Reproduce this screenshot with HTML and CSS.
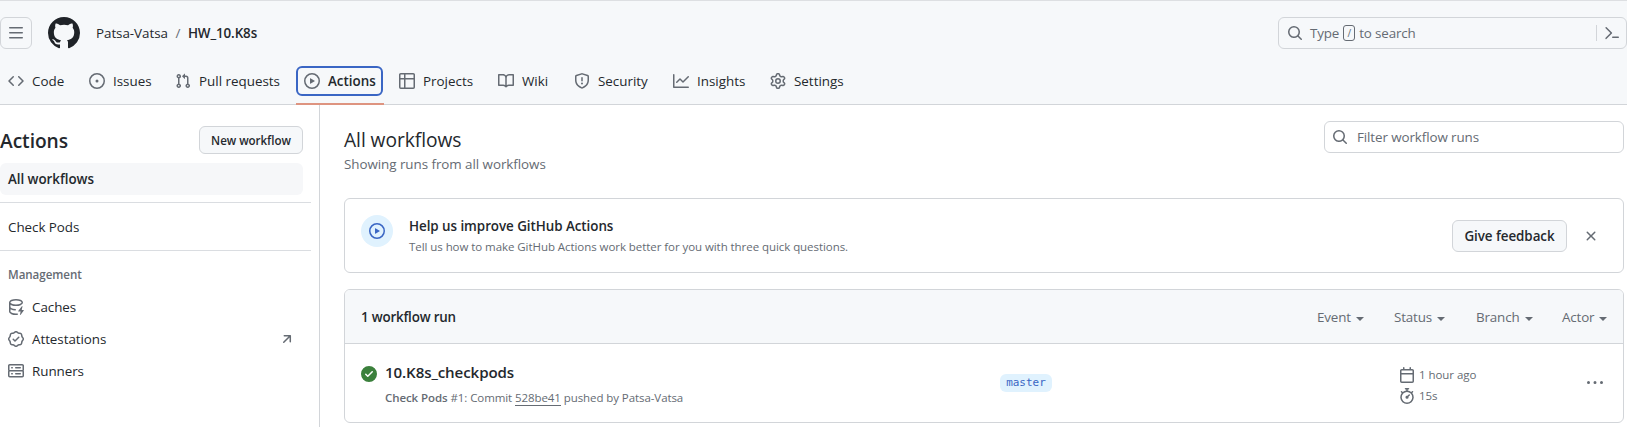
FILE: index.html
```html
<!DOCTYPE html>
<html lang="en">
<head>
<meta charset="utf-8">
<title>Actions · Patsa-Vatsa/HW_10.K8s</title>
<link rel="stylesheet" href="styles.css">
</head>
<body>
<header class="header">
  <div class="topbar">
    <button class="menu-btn" aria-label="Menu"><svg class="icon" viewBox="0 0 16 16"><path d="M1 2.75A.75.75 0 0 1 1.75 2h12.5a.75.75 0 0 1 0 1.5H1.75A.75.75 0 0 1 1 2.75Zm0 5A.75.75 0 0 1 1.75 7h12.5a.75.75 0 0 1 0 1.5H1.75A.75.75 0 0 1 1 7.75ZM1.75 12h12.5a.75.75 0 0 1 0 1.5H1.75a.75.75 0 0 1 0-1.5Z"/></svg></button>
    <svg class="logo" viewBox="0 0 16 16"><path d="M8 0c4.42 0 8 3.58 8 8a8.013 8.013 0 0 1-5.45 7.59c-.4.08-.55-.17-.55-.38 0-.27.01-1.13.01-2.2 0-.75-.25-1.23-.54-1.48 1.78-.2 3.65-.88 3.65-3.95 0-.88-.31-1.59-.82-2.15.08-.2.36-1.02-.08-2.12 0 0-.67-.22-2.2.82-.64-.18-1.32-.27-2-.27-.68 0-1.36.09-2 .27-1.53-1.03-2.2-.82-2.2-.82-.44 1.1-.16 1.92-.08 2.12-.51.56-.82 1.28-.82 2.15 0 3.06 1.86 3.75 3.64 3.95-.23.2-.44.55-.51 1.07-.46.21-1.61.55-2.33-.66-.15-.24-.6-.83-1.23-.82-.67.01-.27.38.01.53.34.19.73.9.82 1.13.16.45.68 1.31 2.69.94 0 .67.01 1.3.01 1.49 0 .21-.15.45-.55.38A7.995 7.995 0 0 1 0 8c0-4.42 3.58-8 8-8Z"/></svg>
    <div class="crumbs"><span>Patsa-Vatsa</span><span class="slash">/</span><b class="repo">HW_10.K8s</b></div>
    <div class="search">
      <svg class="icon" viewBox="0 0 16 16"><path d="M10.68 11.74a6 6 0 0 1-7.922-8.982 6 6 0 0 1 8.982 7.922l3.04 3.04a.749.749 0 0 1-.326 1.275.749.749 0 0 1-.734-.215ZM11.5 7a4.499 4.499 0 1 0-8.997 0A4.499 4.499 0 0 0 11.5 7Z"/></svg>
      <span class="search-text">Type <kbd class="key">/</kbd> to search</span>
      <span class="search-cmd"><svg class="icon" viewBox="0 0 16 16"><path d="m6.354 8.04-4.773 4.773a.75.75 0 1 0 1.061 1.06L7.945 8.57a.75.75 0 0 0 0-1.06L2.642 2.206a.75.75 0 0 0-1.06 1.061L6.353 8.04ZM8.75 11.5a.75.75 0 0 0 0 1.5h5.5a.75.75 0 0 0 0-1.5h-5.5Z"/></svg></span>
    </div>
  </div>
  <nav class="tabs">
    <a class="tab"><svg class="icon" viewBox="0 0 16 16"><path d="m11.28 3.22 4.25 4.25a.75.75 0 0 1 0 1.06l-4.25 4.25a.749.749 0 0 1-1.275-.326.749.749 0 0 1 .215-.734L13.94 8l-3.72-3.72a.749.749 0 0 1 .326-1.275.749.749 0 0 1 .734.215Zm-6.56 0a.751.751 0 0 1 1.042.018.751.751 0 0 1 .018 1.042L2.06 8l3.72 3.72a.749.749 0 0 1-.326 1.275.749.749 0 0 1-.734-.215L.47 8.53a.75.75 0 0 1 0-1.06Z"/></svg>Code</a>
    <a class="tab"><svg class="icon" viewBox="0 0 16 16"><path d="M8 9.5a1.5 1.5 0 1 0 0-3 1.5 1.5 0 0 0 0 3Z"/><path d="M8 0a8 8 0 1 1 0 16A8 8 0 0 1 8 0ZM1.5 8a6.5 6.5 0 1 0 13 0 6.5 6.5 0 0 0-13 0Z"/></svg>Issues</a>
    <a class="tab"><svg class="icon" viewBox="0 0 16 16"><path d="M1.5 3.25a2.25 2.25 0 1 1 3 2.122v5.256a2.251 2.251 0 1 1-1.5 0V5.372A2.25 2.25 0 0 1 1.5 3.25Zm5.677-.177L9.573.677A.25.25 0 0 1 10 .854V2.5h1A2.5 2.5 0 0 1 13.5 5v5.628a2.251 2.251 0 1 1-1.5 0V5a1 1 0 0 0-1-1h-1v1.646a.25.25 0 0 1-.427.177L7.177 3.427a.25.25 0 0 1 0-.354ZM3.75 2.5a.75.75 0 1 0 0 1.5.75.75 0 0 0 0-1.5Zm0 9.5a.75.75 0 1 0 0 1.5.75.75 0 0 0 0-1.5Zm8.25.75a.75.75 0 1 0 1.5 0 .75.75 0 0 0-1.5 0Z"/></svg>Pull requests</a>
    <a class="tab tab-active"><span class="focus"><svg class="icon" viewBox="0 0 16 16"><path d="M8 0a8 8 0 1 1 0 16A8 8 0 0 1 8 0ZM1.5 8a6.5 6.5 0 1 0 13 0 6.5 6.5 0 0 0-13 0Zm4.879-2.773 4.264 2.559a.25.25 0 0 1 0 .428l-4.264 2.559A.25.25 0 0 1 6 10.559V5.442a.25.25 0 0 1 .379-.215Z"/></svg>Actions</span></a>
    <a class="tab"><svg class="icon" viewBox="0 0 16 16"><path d="M0 1.75C0 .784.784 0 1.75 0h12.5C15.216 0 16 .784 16 1.75v12.5A1.75 1.75 0 0 1 14.25 16H1.75A1.75 1.75 0 0 1 0 14.25ZM6.5 6.5v8h7.75a.25.25 0 0 0 .25-.25V6.5Zm8-1.5V1.75a.25.25 0 0 0-.25-.25H6.5V5Zm-13 1.5v7.75c0 .138.112.25.25.25H5v-8ZM5 5V1.5H1.75a.25.25 0 0 0-.25.25V5Z"/></svg>Projects</a>
    <a class="tab"><svg class="icon" viewBox="0 0 16 16"><path d="M0 1.75A.75.75 0 0 1 .75 1h4.253c1.227 0 2.317.59 3 1.501A3.743 3.743 0 0 1 11.006 1h4.245a.75.75 0 0 1 .75.75v10.5a.75.75 0 0 1-.75.75h-4.507a2.25 2.25 0 0 0-1.591.659l-.622.621a.75.75 0 0 1-1.06 0l-.622-.621A2.25 2.25 0 0 0 5.258 13H.75a.75.75 0 0 1-.75-.75Zm7.251 10.324.004-5.073-.002-2.253A2.25 2.25 0 0 0 5.003 2.5H1.5v9h3.757a3.75 3.75 0 0 1 1.994.574ZM8.755 4.75l-.004 7.322a3.752 3.752 0 0 1 1.992-.572H14.5v-9h-3.495a2.25 2.25 0 0 0-2.25 2.25Z"/></svg>Wiki</a>
    <a class="tab"><svg class="icon" viewBox="0 0 16 16"><path d="M7.467.133a1.748 1.748 0 0 1 1.066 0l5.25 1.68A1.75 1.75 0 0 1 15 3.48V7c0 1.566-.32 3.182-1.303 4.682-.983 1.498-2.585 2.813-5.032 3.855a1.697 1.697 0 0 1-1.33 0c-2.447-1.042-4.049-2.357-5.032-3.855C1.32 10.182 1 8.566 1 7V3.48a1.75 1.75 0 0 1 1.217-1.667Zm.61 1.429a.25.25 0 0 0-.153 0l-5.25 1.68a.25.25 0 0 0-.174.238V7c0 1.358.275 2.666 1.057 3.86.784 1.194 2.121 2.34 4.366 3.297a.196.196 0 0 0 .154 0c2.245-.956 3.582-2.104 4.366-3.298C13.225 9.666 13.5 8.36 13.5 7V3.48a.251.251 0 0 0-.174-.237l-5.25-1.68ZM8.75 4.75v3a.75.75 0 0 1-1.5 0v-3a.75.75 0 0 1 1.5 0ZM9 10.5a1 1 0 1 1-2 0 1 1 0 0 1 2 0Z"/></svg>Security</a>
    <a class="tab"><svg class="icon" viewBox="0 0 16 16"><path d="M1.5 1.75V13.5h13.75a.75.75 0 0 1 0 1.5H.75a.75.75 0 0 1-.75-.75V1.75a.75.75 0 0 1 1.5 0Zm14.28 2.53-5.25 5.25a.75.75 0 0 1-1.06 0L7 7.06 4.28 9.78a.751.751 0 0 1-1.042-.018.751.751 0 0 1-.018-1.042l3.25-3.25a.75.75 0 0 1 1.06 0L10 7.94l4.72-4.72a.751.751 0 0 1 1.042.018.751.751 0 0 1 .018 1.042Z"/></svg>Insights</a>
    <a class="tab"><svg class="icon" viewBox="0 0 16 16"><path d="M8 0a8.2 8.2 0 0 1 .701.031C9.444.095 9.99.645 10.16 1.29l.288 1.107c.018.066.079.158.212.224.231.114.454.243.668.386.123.082.233.09.299.071l1.103-.303c.644-.176 1.392.021 1.82.63.27.385.506.792.704 1.218.315.675.111 1.422-.364 1.891l-.814.806c-.049.048-.098.147-.088.294.016.257.016.515 0 .772-.01.147.038.246.088.294l.814.806c.475.469.679 1.216.364 1.891a7.977 7.977 0 0 1-.704 1.217c-.428.61-1.176.807-1.82.63l-1.102-.302c-.067-.019-.177-.011-.3.071a5.909 5.909 0 0 1-.668.386c-.133.066-.194.158-.211.224l-.29 1.106c-.168.646-.715 1.196-1.458 1.26a8.006 8.006 0 0 1-1.402 0c-.743-.064-1.289-.614-1.458-1.26l-.289-1.106c-.018-.066-.079-.158-.212-.224a5.738 5.738 0 0 1-.668-.386c-.123-.082-.233-.09-.299-.071l-1.103.303c-.644.176-1.392-.021-1.82-.63a8.12 8.12 0 0 1-.704-1.218c-.315-.675-.111-1.422.363-1.891l.815-.806c.05-.048.098-.147.088-.294a6.214 6.214 0 0 1 0-.772c.01-.147-.038-.246-.088-.294l-.815-.806C.635 6.045.431 5.298.746 4.623a7.92 7.92 0 0 1 .704-1.217c.428-.61 1.176-.807 1.82-.63l1.102.302c.067.019.177.011.3-.071.214-.143.437-.272.668-.386.133-.066.194-.158.211-.224l.29-1.106C6.009.645 6.556.095 7.299.03 7.53.01 7.764 0 8 0Zm-.571 1.525c-.036.003-.108.036-.137.146l-.289 1.105c-.147.561-.549.967-.998 1.189-.173.086-.34.183-.5.29-.417.278-.97.423-1.529.27l-1.103-.303c-.109-.03-.175.016-.195.045-.22.312-.412.644-.573.99-.014.031-.021.11.059.19l.815.806c.411.406.562.957.53 1.456a4.709 4.709 0 0 0 0 .582c.032.499-.119 1.05-.53 1.456l-.815.806c-.081.08-.073.159-.059.19.162.346.353.677.573.989.02.03.085.076.195.046l1.102-.303c.56-.153 1.113-.008 1.53.27.161.107.328.204.501.29.447.222.85.629.997 1.189l.289 1.105c.029.109.101.143.137.146a6.6 6.6 0 0 0 1.142 0c.036-.003.108-.036.137-.146l.289-1.105c.147-.561.549-.967.998-1.189.173-.086.34-.183.5-.29.417-.278.97-.423 1.529-.27l1.103.303c.109.029.175-.016.195-.045.22-.313.411-.644.573-.99.014-.031.021-.11-.059-.19l-.815-.806c-.411-.406-.562-.957-.53-1.456a4.709 4.709 0 0 0 0-.582c-.032-.499.119-1.05.53-1.456l.815-.806c.081-.08.073-.159.059-.19a6.464 6.464 0 0 0-.573-.989c-.02-.03-.085-.076-.195-.046l-1.102.303c-.56.153-1.113.008-1.53-.27a4.44 4.44 0 0 0-.501-.29c-.447-.222-.85-.629-.997-1.189l-.289-1.105c-.029-.11-.101-.143-.137-.146a6.6 6.6 0 0 0-1.142 0ZM11 8a3 3 0 1 1-6 0 3 3 0 0 1 6 0ZM9.5 8a1.5 1.5 0 1 0-3.001.001A1.5 1.5 0 0 0 9.5 8Z"/></svg>Settings</a>
  </nav>
</header>
<div class="layout">
  <aside class="sidebar">
    <div class="side-head"><h2 class="side-title">Actions</h2><button class="btn btn-small">New workflow</button></div>
    <a class="side-item side-item-active">All workflows</a>
    <hr class="rule">
    <a class="side-item">Check Pods</a>
    <hr class="rule">
    <h3 class="side-label">Management</h3>
    <a class="side-item"><svg class="icon" viewBox="0 0 16 16"><path d="M2.5 5.724V8c0 .248.238.7 1.169 1.159.874.43 2.144.745 3.62.822a.75.75 0 1 1-.078 1.498c-1.622-.085-3.102-.432-4.204-.975a5.565 5.565 0 0 1-.507-.28V12.5c0 .133.058.318.282.551.227.237.591.483 1.101.707 1.015.447 2.47.742 4.117.742.406 0 .802-.018 1.183-.052a.751.751 0 1 1 .134 1.494C8.89 15.98 8.45 16 8 16c-1.805 0-3.475-.32-4.721-.869-.623-.274-1.173-.619-1.579-1.041-.408-.425-.7-.964-.7-1.59v-9c0-.626.292-1.165.7-1.591.406-.42.956-.766 1.579-1.04C4.525.32 6.195 0 8 0c1.806 0 3.476.32 4.721.869.623.274 1.173.619 1.579 1.041.408.425.7.964.7 1.59 0 .626-.292 1.165-.7 1.591-.406.42-.956.766-1.578 1.04C11.475 6.68 9.805 7 8 7c-1.805 0-3.475-.32-4.721-.869a6.15 6.15 0 0 1-.779-.407Zm0-2.224c0 .133.058.318.282.551.227.237.591.483 1.101.707C4.898 5.205 6.353 5.5 8 5.5c1.646 0 3.101-.295 4.118-.742.508-.224.873-.471 1.1-.708.224-.232.282-.417.282-.55 0-.133-.058-.318-.282-.551-.227-.237-.591-.483-1.101-.707C11.102 1.795 9.647 1.5 8 1.5c-1.646 0-3.101.295-4.118.742-.508.224-.873.471-1.1.708-.224.232-.282.417-.282.55Z"/><path d="M14.49 7.582a.375.375 0 0 0-.66-.313l-3.625 4.625a.375.375 0 0 0 .295.606h2.127l-.619 2.922a.375.375 0 0 0 .666.304l3.125-4.125A.375.375 0 0 0 15.5 11h-1.778l.769-3.418Z"/></svg>Caches</a>
    <a class="side-item"><svg class="icon" viewBox="0 0 16 16"><path d="m9.585.52.929.68c.153.112.331.186.518.215l1.138.175a2.678 2.678 0 0 1 2.24 2.24l.174 1.139c.029.187.103.365.215.518l.68.928a2.677 2.677 0 0 1 0 3.17l-.68.928a1.174 1.174 0 0 0-.215.518l-.175 1.138a2.678 2.678 0 0 1-2.241 2.241l-1.138.175a1.17 1.17 0 0 0-.518.215l-.928.68a2.677 2.677 0 0 1-3.17 0l-.928-.68a1.174 1.174 0 0 0-.518-.215L3.83 14.41a2.678 2.678 0 0 1-2.24-2.24l-.175-1.138a1.17 1.17 0 0 0-.215-.518l-.68-.928a2.677 2.677 0 0 1 0-3.17l.68-.928c.112-.153.186-.331.215-.518l.175-1.14a2.678 2.678 0 0 1 2.24-2.24l1.139-.175c.187-.029.365-.103.518-.215l.928-.68a2.677 2.677 0 0 1 3.17 0ZM7.303 1.728l-.927.68a2.67 2.67 0 0 1-1.18.489l-1.137.174a1.179 1.179 0 0 0-.987.987l-.174 1.136a2.677 2.677 0 0 1-.489 1.18l-.68.928a1.18 1.18 0 0 0 0 1.394l.68.927c.256.348.424.753.489 1.18l.174 1.137c.078.509.478.909.987.987l1.136.174a2.67 2.67 0 0 1 1.18.489l.928.68c.414.305.979.305 1.394 0l.927-.68a2.67 2.67 0 0 1 1.18-.489l1.137-.174a1.18 1.18 0 0 0 .987-.987l.174-1.136a2.67 2.67 0 0 1 .489-1.18l.68-.928a1.176 1.176 0 0 0 0-1.394l-.68-.927a2.686 2.686 0 0 1-.489-1.18l-.174-1.137a1.179 1.179 0 0 0-.987-.987l-1.136-.174a2.677 2.677 0 0 1-1.18-.489l-.928-.68a1.176 1.176 0 0 0-1.394 0ZM11.28 6.78l-3.75 3.75a.75.75 0 0 1-1.06 0L4.72 8.78a.751.751 0 0 1 .018-1.042.751.751 0 0 1 1.042-.018L7 8.94l3.22-3.22a.751.751 0 0 1 1.042.018.751.751 0 0 1 .018 1.042Z"/></svg>Attestations<svg class="icon icon-end" viewBox="0 0 16 16"><path d="M4.53 4.75A.75.75 0 0 1 5.28 4h6.01a.75.75 0 0 1 .75.75v6.01a.75.75 0 0 1-1.5 0v-4.2l-5.26 5.261a.749.749 0 0 1-1.275-.326.749.749 0 0 1 .215-.734L9.48 5.5h-4.2a.75.75 0 0 1-.75-.75Z"/></svg></a>
    <a class="side-item"><svg class="icon" viewBox="0 0 16 16"><path d="M1.75 1h12.5c.966 0 1.75.784 1.75 1.75v4c0 .372-.116.717-.314 1 .198.283.314.628.314 1v4a1.75 1.75 0 0 1-1.75 1.75H1.75A1.75 1.75 0 0 1 0 12.75v-4c0-.358.109-.707.314-1a1.739 1.739 0 0 1-.314-1v-4C0 1.784.784 1 1.75 1ZM1.5 2.75v4c0 .138.112.25.25.25h12.5a.25.25 0 0 0 .25-.25v-4a.25.25 0 0 0-.25-.25H1.75a.25.25 0 0 0-.25.25Zm.25 5.75a.25.25 0 0 0-.25.25v4c0 .138.112.25.25.25h12.5a.25.25 0 0 0 .25-.25v-4a.25.25 0 0 0-.25-.25ZM7 4.75A.75.75 0 0 1 7.75 4h4.5a.75.75 0 0 1 0 1.5h-4.5A.75.75 0 0 1 7 4.75ZM7.75 10h4.5a.75.75 0 0 1 0 1.5h-4.5a.75.75 0 0 1 0-1.5ZM3 4.75A.75.75 0 0 1 3.75 4h.5a.75.75 0 0 1 0 1.5h-.5A.75.75 0 0 1 3 4.75ZM3.75 10h.5a.75.75 0 0 1 0 1.5h-.5a.75.75 0 0 1 0-1.5Z"/></svg>Runners</a>
  </aside>
  <main class="main">
    <div class="main-head">
      <div><h1 class="title">All workflows</h1><p class="subtitle">Showing runs from all workflows</p></div>
      <div class="filter"><svg class="icon" viewBox="0 0 16 16"><path d="M10.68 11.74a6 6 0 0 1-7.922-8.982 6 6 0 0 1 8.982 7.922l3.04 3.04a.749.749 0 0 1-.326 1.275.749.749 0 0 1-.734-.215ZM11.5 7a4.499 4.499 0 1 0-8.997 0A4.499 4.499 0 0 0 11.5 7Z"/></svg><span>Filter workflow runs</span></div>
    </div>
    <section class="banner">
      <span class="banner-icon"><svg class="icon" viewBox="0 0 16 16"><path d="M8 0a8 8 0 1 1 0 16A8 8 0 0 1 8 0ZM1.5 8a6.5 6.5 0 1 0 13 0 6.5 6.5 0 0 0-13 0Zm4.879-2.773 4.264 2.559a.25.25 0 0 1 0 .428l-4.264 2.559A.25.25 0 0 1 6 10.559V5.442a.25.25 0 0 1 .379-.215Z"/></svg></span>
      <div class="banner-text"><h4 class="banner-title">Help us improve GitHub Actions</h4><p class="banner-sub">Tell us how to make GitHub Actions work better for you with three quick questions.</p></div>
      <button class="btn btn-feedback">Give feedback</button>
      <svg class="icon close" viewBox="0 0 16 16"><path d="M3.72 3.72a.75.75 0 0 1 1.06 0L8 6.94l3.22-3.22a.749.749 0 0 1 1.275.326.749.749 0 0 1-.215.734L9.06 8l3.22 3.22a.749.749 0 0 1-.326 1.275.749.749 0 0 1-.734-.215L8 9.06l-3.22 3.22a.751.751 0 0 1-1.042-.018.751.751 0 0 1-.018-1.042L6.94 8 3.72 4.78a.75.75 0 0 1 0-1.06Z"/></svg>
    </section>
    <section class="runs">
      <div class="runs-head"><b class="count">1 workflow run</b>
        <div class="filters"><span class="drop">Event</span><span class="drop">Status</span><span class="drop">Branch</span><span class="drop">Actor</span></div>
      </div>
      <div class="run">
        <svg class="icon ok" viewBox="0 0 16 16"><path d="M8 16A8 8 0 1 1 8 0a8 8 0 0 1 0 16Zm3.78-9.72a.751.751 0 0 0-.018-1.042.751.751 0 0 0-1.042-.018L6.75 9.19 5.28 7.72a.751.751 0 0 0-1.042.018.751.751 0 0 0-.018 1.042l2 2a.75.75 0 0 0 1.06 0Z"/></svg>
        <div class="run-info"><div class="run-title">10.K8s_checkpods</div><div class="run-meta"><b class="run-flow">Check Pods</b> #1: Commit <a class="sha">528be41</a> pushed by Patsa-Vatsa</div></div>
        <div class="run-branch"><span class="branch">master</span></div>
        <div class="run-times">
          <div class="time"><svg class="icon" viewBox="0 0 16 16"><path d="M4.75 0a.75.75 0 0 1 .75.75V2h5V.75a.75.75 0 0 1 1.5 0V2h1.25c.966 0 1.75.784 1.75 1.75v10.5A1.75 1.75 0 0 1 13.25 16H2.75A1.75 1.75 0 0 1 1 14.25V3.75C1 2.784 1.784 2 2.75 2H4V.75A.75.75 0 0 1 4.75 0ZM2.5 7.5v6.75c0 .138.112.25.25.25h10.5a.25.25 0 0 0 .25-.25V7.5Zm10.75-4H2.75a.25.25 0 0 0-.25.25V6h11V3.75a.25.25 0 0 0-.25-.25Z"/></svg>1 hour ago</div>
          <div class="time"><svg class="icon" viewBox="0 0 16 16"><path d="M5.75.75A.75.75 0 0 1 6.5 0h3a.75.75 0 0 1 0 1.5h-.75v1l-.001.041a6.724 6.724 0 0 1 3.464 1.435l.007-.006.75-.75a.749.749 0 0 1 1.275.326.749.749 0 0 1-.215.734l-.75.75-.006.007a6.75 6.75 0 1 1-10.548 0L2.72 5.03l-.75-.75a.751.751 0 0 1 .018-1.042.751.751 0 0 1 1.042-.018l.75.75.007.006A6.72 6.72 0 0 1 7.25 2.541V1.5H6.5a.75.75 0 0 1-.75-.75ZM8 14.5a5.25 5.25 0 1 0-.001-10.501A5.25 5.25 0 0 0 8 14.5Zm.389-6.7 1.33-1.33a.75.75 0 1 1 1.061 1.06L9.45 8.861A1.503 1.503 0 0 1 8 10.75a1.499 1.499 0 1 1 .389-2.95Z"/></svg>15s</div>
        </div>
        <svg class="icon kebab" viewBox="0 0 16 16"><path d="M8 9a1.5 1.5 0 1 0 0-3 1.5 1.5 0 0 0 0 3ZM1.5 9a1.5 1.5 0 1 0 0-3 1.5 1.5 0 0 0 0 3Zm13 0a1.5 1.5 0 1 0 0-3 1.5 1.5 0 0 0 0 3Z"/></svg>
      </div>
    </section>
  </main>
</div>
</body>
</html>
```
FILE: styles.css
```css
* { box-sizing: border-box; }
body { margin: 0; height: 427px; overflow: hidden; background: #fff; color: #24282d; font: 13.4px/20px "Open Sans", "Noto Sans", sans-serif; letter-spacing: -.05px; }
h1, h2, h3, h4, p { margin: 0; }
b { font-weight: 560; }
a, span, div { white-space: nowrap; }
.icon { width: 16px; height: 16px; flex: none; fill: #656b73; }

.header { height: 105px; background: #f6f8fa; border-top: 1px solid #dddfe2; border-bottom: 1px solid #d2d5d9; }
.topbar { display: flex; align-items: center; box-sizing: content-box; height: 32px; padding-top: 16px; }
.menu-btn { display: flex; align-items: center; justify-content: center; width: 32px; height: 32px; padding: 0; background: none; border: 1px solid #d2d5d9; border-radius: 6px; }
.logo { width: 32px; height: 32px; margin-left: 16px; fill: #1f2328; }
.crumbs { display: flex; margin-left: 16px; }
.slash { width: 20px; text-align: center; color: #656b73; }
.repo { letter-spacing: -.1px; }
.search { display: flex; align-items: center; width: 349px; height: 32px; margin-left: auto; padding: 0 6px 0 8px; border: 1px solid #d2d5d9; border-radius: 6px; color: #656b73; }
.search-text { display: flex; align-items: center; gap: 4px; margin-left: 7px; letter-spacing: -.15px; }
.key { display: flex; align-items: center; justify-content: center; width: 12px; height: 16px; border: 1px solid #656b73; border-radius: 3px; font: 10px/14px "Open Sans", sans-serif; }
.search-cmd { display: flex; align-items: center; height: 16px; margin-left: auto; padding-left: 7px; border-left: 1px solid #d2d5d9; }

.tabs { display: grid; grid-template-columns: 81px 86px 129px 95px 99px 76px 99px 97px 100px; padding-top: 16px; height: 56px; }
.tab { display: flex; align-items: center; gap: 8px; height: 32px; padding: 0 8px; letter-spacing: 0; }
.tab-active { align-items: flex-start; width: 88px; height: 40px; padding: 1px 0 0; font-weight: 560; border-bottom: 2px solid #de9480; }
.focus { display: flex; align-items: center; gap: 8px; width: 87px; height: 30px; padding: 0 6px; border: 2px solid #3a66c4; border-radius: 6px; }

.layout { display: flex; height: 322px; }
.sidebar { width: 320px; padding: 21px 8px 0 0; border-right: 1px solid #d2d5d9; }
.side-head { display: flex; align-items: center; justify-content: space-between; height: 28px; margin: 0 8px 9px 0; }
.side-title { padding-top: 1px; font-size: 19.2px; line-height: 28px; font-weight: 560; }
.btn { height: 32px; padding: 0 12px; background: #f6f8fa; border: 1px solid #d2d5d9; border-radius: 6px; color: #25292e; font: 560 13.4px/20px "Open Sans", sans-serif; letter-spacing: -.05px; white-space: nowrap; }
.btn-small { width: 104px; height: 28px; font-size: 11.6px; padding: 1px 0 0; }
.btn-feedback { width: 115px; padding: 0; }
.side-item { display: flex; align-items: center; gap: 8px; height: 32px; margin-right: 8px; padding: 0 8px; border-radius: 6px; }
.side-item-active { background: #f6f7f9; font-weight: 560; }
.rule { height: 1px; margin: 7px 0 8px; border: 0; background: #dadde1; }
.side-label { margin: 14px 8px 6px; font-size: 11.6px; line-height: 20px; font-weight: 560; color: #656b73; }
.icon-end { margin-left: auto; }

.main { flex: 1; padding: 16px 3px 0 24px; }
.main-head { display: flex; justify-content: space-between; height: 77px; }
.title { margin-top: 4px; font-size: 19.2px; line-height: 30px; font-weight: 400; }
.subtitle { margin-top: -1px; color: #656b73; line-height: 20px; }
.filter { display: flex; align-items: center; gap: 9px; width: 300px; height: 32px; padding: 0 7px; border: 1px solid #d2d5d9; border-radius: 6px; color: #656b73; letter-spacing: -.1px; }
.banner { display: flex; align-items: center; height: 75px; padding: 0 24px 0 16px; border: 1px solid #d2d5d9; border-radius: 6px; }
.banner-icon { display: flex; align-items: center; justify-content: center; width: 32px; height: 32px; margin-bottom: 9px; border-radius: 50%; background: #e0f2fe; }
.banner-icon .icon { fill: #3a66c4; }
.banner-text { margin: 0 auto 0 16px; }
.banner-title { font-size: 13.4px; line-height: 22px; font-weight: 560; }
.banner-sub { font-size: 11.5px; line-height: 20px; letter-spacing: -.06px; color: #656b73; }
.close { margin-left: 16px; }
.runs { margin-top: 16px; border: 1px solid #d2d5d9; border-radius: 6px; overflow: hidden; }
.runs-head { display: flex; align-items: center; justify-content: space-between; height: 54px; padding: 0 16px; background: #f6f8fa; border-bottom: 1px solid #d2d5d9; }
.count { letter-spacing: -.2px; }
.filters { display: grid; grid-template-columns: 77px 82px 86px 45px; padding-top: 1px; color: #656b73; }
.drop { display: flex; align-items: center; letter-spacing: -.15px; }
.drop::after { content: ""; margin: 3px 0 0 5px; border: 4px solid transparent; border-top-color: currentColor; border-bottom: 0; }
.run { display: grid; grid-template-columns: 24px 615px 399px 1fr 16px; height: 78px; padding: 0 20px 0 16px; }
.ok { margin-top: 22px; fill: #3b803c; }
.run-title { margin-top: 16px; font-size: 15.1px; line-height: 24px; font-weight: 560; letter-spacing: -.1px; }
.run-meta { margin-top: 4px; font-size: 11.5px; line-height: 20px; letter-spacing: -.08px; color: #656b73; }
.sha { border-bottom: 1px solid #656b73; }
.branch { display: block; width: 52px; height: 18px; margin-top: 30px; border-radius: 6px; background: #e0f2fe; color: #3a66c4; text-align: center; font: 11px/18px "DejaVu Sans Mono", monospace; letter-spacing: 0; }
.run-times { margin-top: 20px; }
.time { display: flex; align-items: center; gap: 4px; height: 21px; font-size: 11.5px; line-height: 16px; color: #656b73; }
.kebab { margin-top: 31px; }
```
